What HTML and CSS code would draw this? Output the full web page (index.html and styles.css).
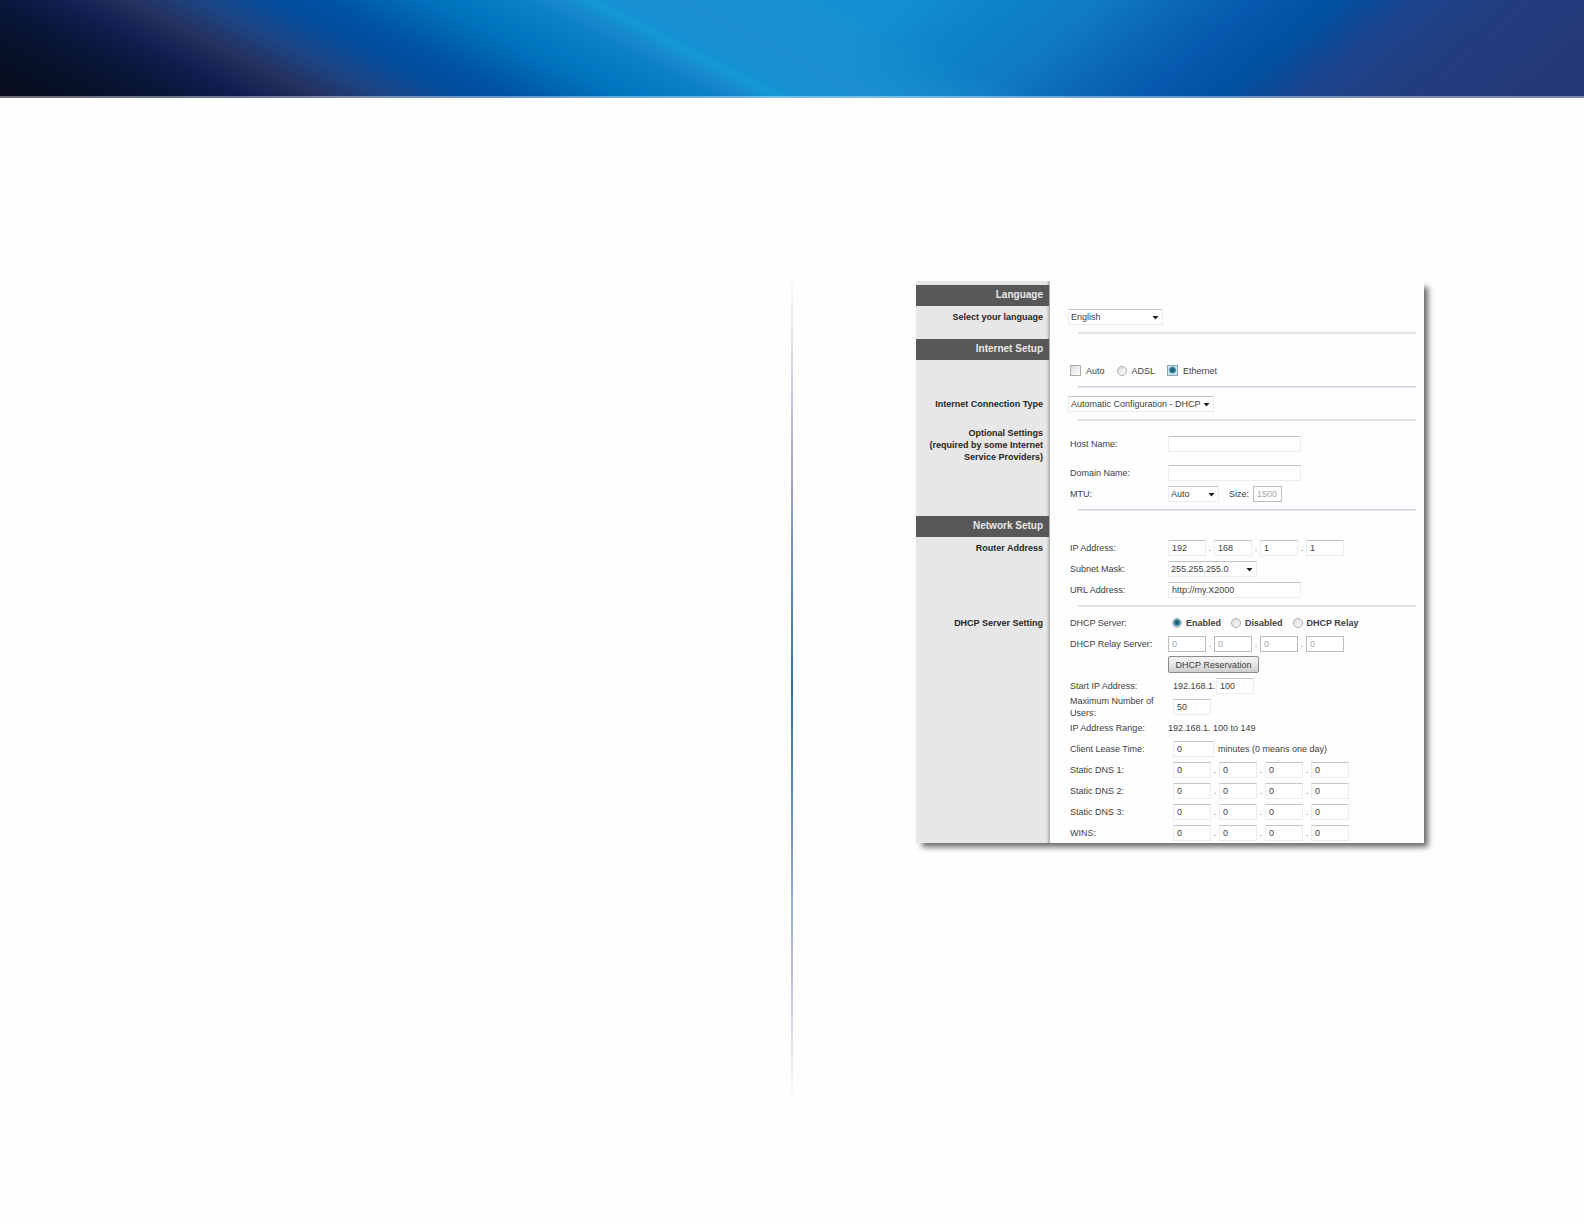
FILE: index.html
```html
<!DOCTYPE html>
<html lang="en">
<head>
<meta charset="utf-8">
<meta name="viewport" content="width=device-width, initial-scale=1">
<title>Basic Setup</title>
<link rel="stylesheet" href="styles.css">
</head>
<body>
<header class="banner"></header>
<main class="page">
  <div class="column"></div>
  <div class="divider"></div>
  <div class="column">
    <form class="panel">
      <section>
        <h2 class="title">Language</h2>
        <div class="group">
          <label class="side" for="language">Select your language</label>
          <div class="fields">
            <div class="row">
              <span class="select w-lang"><select id="language"><option>English</option></select></span>
            </div>
            <hr class="light">
          </div>
        </div>
      </section>

      <section>
        <h2 class="title">Internet Setup</h2>
        <div class="group">
          <div class="side"></div>
          <div class="fields">
            <div class="row choices">
              <label class="choice"><input type="checkbox" name="auto">Auto</label>
              <label class="choice"><input type="radio" name="link">ADSL</label>
              <label class="choice"><input type="radio" name="link" class="framed" checked>Ethernet</label>
            </div>
            <hr>
          </div>
        </div>
        <div class="group">
          <label class="side" for="connection">Internet Connection Type</label>
          <div class="fields">
            <div class="row">
              <span class="select w-conn"><select id="connection"><option>Automatic Configuration - DHCP</option></select></span>
            </div>
            <hr class="light">
          </div>
        </div>
        <div class="group optional">
          <div class="side">Optional Settings<br>(required by some Internet<br>Service Providers)</div>
          <div class="fields">
            <div class="row host">
              <label class="name" for="host">Host Name:</label>
              <input type="text" id="host" class="w-text">
            </div>
            <div class="row">
              <label class="name" for="domain">Domain Name:</label>
              <input type="text" id="domain" class="w-text">
            </div>
            <div class="row">
              <label class="name" for="mtu">MTU:</label>
              <span class="select w-mtu"><select id="mtu"><option>Auto</option></select></span>
              <label class="size" for="size">Size:</label>
              <input type="text" id="size" class="w-size" value="1500" disabled>
            </div>
            <hr>
          </div>
        </div>
      </section>

      <section>
        <h2 class="title">Network Setup</h2>
        <div class="group">
          <div class="side">Router Address</div>
          <div class="fields">
            <div class="row">
              <label class="name" for="ip">IP Address:</label>
              <input type="text" id="ip" class="octet" value="192"><i>.</i><input type="text" class="octet" value="168" aria-label="IP Address 2"><i>.</i><input type="text" class="octet" value="1" aria-label="IP Address 3"><i>.</i><input type="text" class="octet" value="1" aria-label="IP Address 4">
            </div>
            <div class="row">
              <label class="name" for="mask">Subnet Mask:</label>
              <span class="select w-mask"><select id="mask"><option>255.255.255.0</option></select></span>
            </div>
            <div class="row">
              <label class="name" for="url">URL Address:</label>
              <input type="text" id="url" class="w-text" value="http://my.X2000">
            </div>
            <hr class="light">
          </div>
        </div>
        <div class="group">
          <div class="side">DHCP Server Setting</div>
          <div class="fields">
            <div class="row">
              <span class="name">DHCP Server:</span>
              <div class="modes">
                <label class="choice"><input type="radio" name="dhcp" checked>Enabled</label>
                <label class="choice"><input type="radio" name="dhcp">Disabled</label>
                <label class="choice"><input type="radio" name="dhcp">DHCP Relay</label>
              </div>
            </div>
            <div class="row">
              <label class="name" for="relay">DHCP Relay Server:</label>
              <input type="text" id="relay" class="octet" value="0" disabled><i>.</i><input type="text" class="octet" value="0" aria-label="DHCP Relay Server 2" disabled><i>.</i><input type="text" class="octet" value="0" aria-label="DHCP Relay Server 3" disabled><i>.</i><input type="text" class="octet" value="0" aria-label="DHCP Relay Server 4" disabled>
            </div>
            <div class="row">
              <span class="name"></span>
              <button type="button">DHCP Reservation</button>
            </div>
            <div class="row indent">
              <label class="name" for="start">Start IP Address:</label>
              <span class="prefix">192.168.1.</span><input type="text" id="start" class="octet" value="100">
            </div>
            <div class="row indent">
              <label class="name" for="users">Maximum Number of Users:</label>
              <input type="text" id="users" class="octet" value="50">
            </div>
            <div class="row">
              <span class="name">IP Address Range:</span>
              <span>192.168.1. 100 to 149</span>
            </div>
            <div class="row indent">
              <label class="name" for="lease">Client Lease Time:</label>
              <input type="text" id="lease" class="w-lease" value="0">
              <span class="unit">minutes (0 means one day)</span>
            </div>
            <div class="row indent">
              <label class="name" for="dns1">Static DNS 1:</label>
              <input type="text" id="dns1" class="octet" value="0"><i>.</i><input type="text" class="octet" value="0" aria-label="Static DNS 1, 2"><i>.</i><input type="text" class="octet" value="0" aria-label="Static DNS 1, 3"><i>.</i><input type="text" class="octet" value="0" aria-label="Static DNS 1, 4">
            </div>
            <div class="row indent">
              <label class="name" for="dns2">Static DNS 2:</label>
              <input type="text" id="dns2" class="octet" value="0"><i>.</i><input type="text" class="octet" value="0" aria-label="Static DNS 2, 2"><i>.</i><input type="text" class="octet" value="0" aria-label="Static DNS 2, 3"><i>.</i><input type="text" class="octet" value="0" aria-label="Static DNS 2, 4">
            </div>
            <div class="row indent">
              <label class="name" for="dns3">Static DNS 3:</label>
              <input type="text" id="dns3" class="octet" value="0"><i>.</i><input type="text" class="octet" value="0" aria-label="Static DNS 3, 2"><i>.</i><input type="text" class="octet" value="0" aria-label="Static DNS 3, 3"><i>.</i><input type="text" class="octet" value="0" aria-label="Static DNS 3, 4">
            </div>
            <div class="row indent">
              <label class="name" for="wins">WINS:</label>
              <input type="text" id="wins" class="octet" value="0"><i>.</i><input type="text" class="octet" value="0" aria-label="WINS 2"><i>.</i><input type="text" class="octet" value="0" aria-label="WINS 3"><i>.</i><input type="text" class="octet" value="0" aria-label="WINS 4">
            </div>
          </div>
        </div>
      </section>
    </form>
  </div>
</main>
</body>
</html>
```

FILE: styles.css
```css
* {
  box-sizing: border-box;
}

body {
  margin: 0;
  background: #fefefe;
  color: #404040;
  font: 9px/12px "Liberation Sans", Arial, sans-serif;
}

/* Banner: a left sweep that fades into a right sweep */
.banner {
  height: 98px;
  border-bottom: 2px solid rgba(255, 255, 255, 0.4);
  background:
    linear-gradient(27deg,
      #0b0d1e 0%, #061026 5%, #091638 10%, #121d50 14%, #25305f 18%,
      #1c4584 22%, #034c9c 26%, #0052a6 29%, #0073bd 35%, #0a80c8 40%,
      #1687cc 42%, #1498d6 44%, #1590d2 45%, #1c90d0 49%, rgba(28, 144, 208, 0) 58%),
    linear-gradient(140deg,
      #1490d2 53%, #0c84c8 59%, #1079c3 65%, #0a66b6 70%, #0659ae 74%,
      #0150a0 79%, #1b448e 83%, #223e80 88%, #253676 100%);
  background-origin: border-box;
}

.page {
  display: grid;
  grid-template-columns: 1fr 2px 1fr;
  padding: 173px 0 119px;
}

.divider {
  min-height: 834px;
  background: linear-gradient(#fefefe, #cfc9de 14%, #b3a9cf 22%, #6d8fc2 34%, #2f6ea8 50%, #5c86bb 62%, #93add6 76%, #c5bedb 85%, #fefefe);
}

.column {
  padding: 10px 32px 0 123px;
}

.panel {
  max-width: 508px;
  padding-top: 4px;
  background:
    linear-gradient(90deg, #e7e7e7 130px, #dcdcdc 131px, #a8a8a8 134px, transparent 134px) #fefefe;
  box-shadow: 5px 5px 6px -1px rgba(0, 0, 0, 0.6);
}

.title {
  width: 133px;
  height: 21px;
  margin: 0;
  padding-right: 6px;
  background: #585858;
  color: #e8e8e8;
  font-size: 10px;
  line-height: 20px;
  text-align: right;
}

.group {
  display: grid;
  grid-template-columns: 134px 1fr;
}

.side {
  padding: 5px 7px 0 0;
  color: #262626;
  font-weight: bold;
  text-align: right;
  white-space: nowrap;
}

.optional .side {
  padding-top: 1px;
}

.fields {
  padding-left: 20px;
}

.row {
  display: flex;
  align-items: center;
  height: 21px;
}

.host {
  height: 36px;
}

.name {
  flex: none;
  width: 98px;
  padding-right: 12px;
}

.indent .name {
  width: 103px;
}

hr {
  height: 2px;
  margin: 5px 8px 5px;
  border: 0;
  border-top: 1px solid #cdcfdc;
  background: #e6e6ee;
}

hr.light {
  border-top-color: #dedee3;
}

i {
  width: 8px;
  color: #777;
  font-style: normal;
  text-align: center;
}

input[type="text"],
select,
button {
  margin: 0;
  color: #404040;
  font: inherit;
}

input[type="text"] {
  height: 16px;
  padding: 0 3px;
  border: 1px solid #ececec;
  border-top-color: #c4c4c4;
  background: #fff;
}

input[type="text"]:disabled {
  border-color: #bdbdbd;
  color: #a8a8a8;
}

.octet {
  width: 38px;
}

.w-text {
  width: 133px;
}

.w-size {
  width: 29px;
}

.w-lease {
  width: 41px;
}

.size {
  margin: 0 4px 0 10px;
}

.prefix {
  width: 43px;
}

.unit {
  margin-left: 4px;
}

.select {
  position: relative;
}

.select select {
  display: block;
  width: 100%;
  height: 16px;
  padding: 0 2px;
  border: 1px solid #ececec;
  border-top-color: #c4c4c4;
  border-radius: 0;
  background: #fff;
  appearance: none;
}

.select::after {
  content: "";
  position: absolute;
  top: 7px;
  right: 4px;
  width: 7px;
  height: 4px;
  background: #1c1c1c;
  clip-path: polygon(0 0, 100% 0, 50% 100%);
  pointer-events: none;
}

.w-lang {
  width: 95px;
  margin-left: -2px;
}

.w-conn {
  width: 146px;
  margin-left: -2px;
}

.w-mtu {
  width: 51px;
}

.w-mask {
  width: 89px;
}

.choices {
  gap: 12px;
}

.choices .choice {
  gap: 5px;
}

.modes {
  display: flex;
  gap: 10px;
  padding-left: 4px;
  font-weight: bold;
}

.choice {
  display: flex;
  align-items: center;
  gap: 4px;
}

.choice input {
  width: 11px;
  height: 11px;
  margin: 0;
  border: 1px solid #adadad;
  background: linear-gradient(135deg, #dcdcdc, #fff);
  appearance: none;
}

.choice input[type="radio"] {
  width: 10px;
  height: 10px;
  border-radius: 50%;
}

.choice input[type="radio"]:checked {
  background: radial-gradient(circle at 50% 45%, #1c5a70 1px, #3f90ac 3px, #cfe4ec 4px);
}

.choice input[type="radio"].framed {
  width: 11px;
  height: 11px;
  border-color: #8aa4bc;
  border-radius: 0;
}

button {
  width: 91px;
  height: 17px;
  padding: 0;
  border: 1px solid #8c8c8c;
  border-radius: 2px;
  background: linear-gradient(#f4f4f4, #e6e6e6 50%, #cfcfcf);
  text-align: center;
}
```
